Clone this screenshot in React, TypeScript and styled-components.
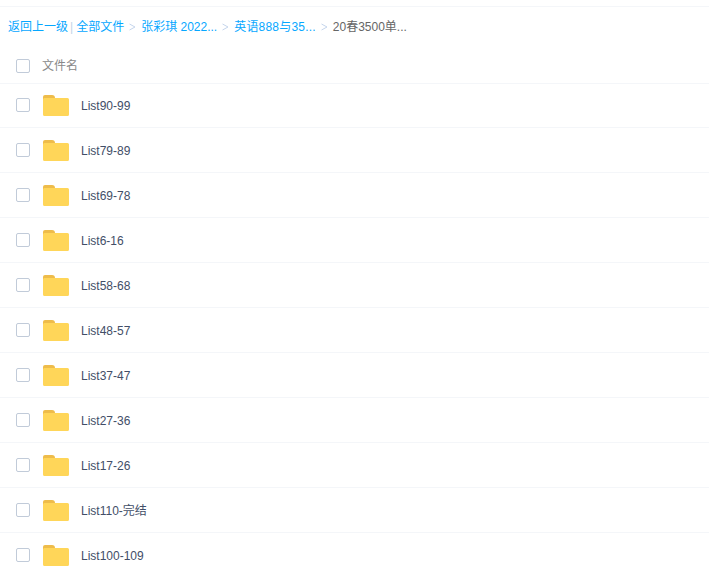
import styled, { createGlobalStyle } from "styled-components";

const files = [
  "List90-99",
  "List79-89",
  "List69-78",
  "List6-16",
  "List58-68",
  "List48-57",
  "List37-47",
  "List27-36",
  "List17-26",
  "List110-完结",
  "List100-109",
];

const GlobalStyle = createGlobalStyle`
  html, body {
    margin: 0;
    padding: 0;
    background: #fff;
    overflow: hidden;
  }
  body {
    font-family: "Liberation Sans", "Noto Sans CJK SC", sans-serif;
    font-size: 12px;
    line-height: 16px;
  }
`;

const Page = styled.div`
  width: 709px;
  height: 577px;
  overflow: hidden;
  padding-top: 6px;
  box-sizing: border-box;
`;

const Crumbs = styled.div`
  display: flex;
  align-items: center;
  height: 40px;
  padding-left: 8px;
  border-top: 1px solid #f4f6f9;
  white-space: nowrap;
  color: #666;
`;

const CrumbLink = styled.a<{ $spacing?: number }>`
  color: #06a7ff;
  cursor: pointer;
  letter-spacing: ${(p) => p.$spacing ?? 0}px;
`;

const Pipe = styled.span`
  color: #c3d3e6;
  margin: 0 3px 0 2px;
`;

const Arrow = styled.span`
  display: flex;
  margin: 0 5px 0 5px;
  color: #c5d5ec;
`;

const HeaderRow = styled.div`
  display: flex;
  align-items: center;
  height: 34px;
  padding: 2px 0 0 16px;
  box-shadow: 0 1px 0 #f4f6f9;
  color: #888;
`;

const Row = styled.div`
  display: flex;
  align-items: center;
  height: 44px;
  padding-left: 16px;
  border-bottom: 1px solid #f4f6f9;
  color: #424e67;
`;

const Check = styled.span`
  width: 12px;
  height: 12px;
  flex: none;
  border-radius: 2px;
  border: 1px solid #c1cbd9;
`;

const HeaderLabel = styled.span`
  margin-left: 12px;
`;

const FileName = styled.span`
  padding-top: 2px;
`;

const Folder = styled.svg`
  margin-left: 13px;
  margin-right: 12px;
  flex: none;
`;

const ArrowIcon = () => (
  <svg width="7" height="8" viewBox="0 0 7 8" fill="none">
    <path d="M0.500 1l5.500 3-5.500 3" stroke="currentColor" strokeWidth="1" />
  </svg>
);

const FolderIcon = () => (
  <Folder width="26" height="21" viewBox="0 0 26 21">
    <path d="M0 2a2 2 0 0 1 2-2h7a3 3 0 0 1 3 3v3H0z" fill="#eebc4b" />
    <path d="M0 4.500a1.500 1.500 0 0 1 1.500-1.500h23A1.500 1.500 0 0 1 26 4.500v15a1.500 1.500 0 0 1-1.500 1.500h-23A1.500 1.500 0 0 1 0 19.500z" fill="#ffd659" />
  </Folder>
);

export default function App() {
  return (
    <Page>
      <GlobalStyle />
      <Crumbs>
        <CrumbLink>返回上一级</CrumbLink>
        <Pipe>|</Pipe>
        <CrumbLink>全部文件</CrumbLink>
        <Arrow><ArrowIcon /></Arrow>
        <CrumbLink>张彩琪 2022...</CrumbLink>
        <Arrow><ArrowIcon /></Arrow>
        <CrumbLink $spacing={0.2}>英语888与35...</CrumbLink>
        <Arrow><ArrowIcon /></Arrow>
        <span>20春3500单...</span>
      </Crumbs>
      <HeaderRow>
        <Check />
        <HeaderLabel>文件名</HeaderLabel>
      </HeaderRow>
      {files.map((name) => (
        <Row key={name}>
          <Check />
          <FolderIcon />
          <FileName>{name}</FileName>
        </Row>
      ))}
    </Page>
  );
}
